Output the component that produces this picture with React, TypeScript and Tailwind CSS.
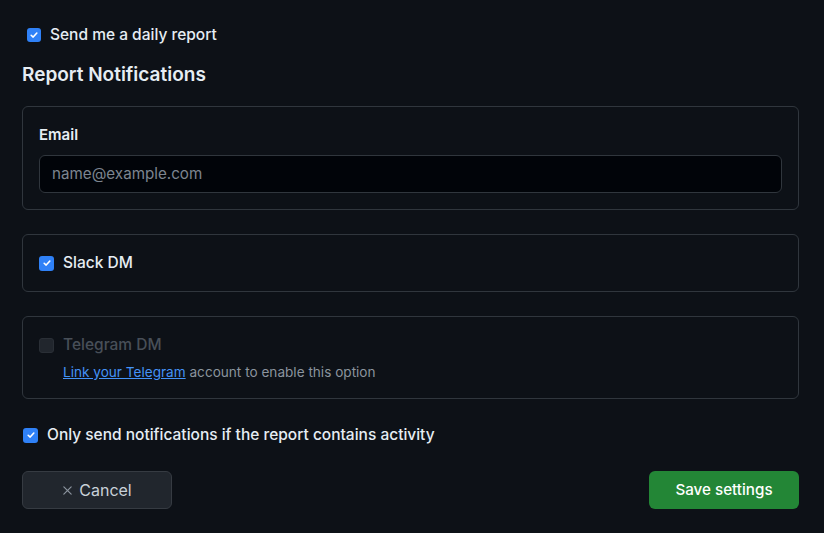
import React from "react";

function Check({ checked = true, disabled = false, size = 15 }: { checked?: boolean; disabled?: boolean; size?: number }) {
  const sz = size === 14 ? "w-[14px] h-[14px]" : "w-[15px] h-[15px]";
  if (disabled) {
    return <span className={`${sz} shrink-0 rounded-[3px] bg-[#21262d] border border-[#2a2f36]`} />;
  }
  return (
    <span className={`${sz} shrink-0 rounded-[3px] bg-[#2f81f7] flex items-center justify-center`}>
      {checked && (
        <svg viewBox="0 0 12 12" className="w-[10px] h-[10px]" fill="none">
          <path d="M2.6 6.3 L5 8.5 L9.4 3.6" stroke="#ffffff" strokeWidth="1.9" strokeLinecap="round" strokeLinejoin="round" />
        </svg>
      )}
    </span>
  );
}

export default function App() {
  return (
    <div
      className="min-h-[533px] w-full bg-[#0d1117] text-[#e6edf3] pl-[22px] pr-[25px] pt-[25px]"
      style={{ fontFamily: "Inter, 'Noto Sans', sans-serif" }}
    >
      <label className="flex items-center h-5 pl-[5px] gap-[9px]">
        <Check size={14} />
        <span className="text-[15.5px] font-medium">Send me a daily report</span>
      </label>

      <h2 className="mt-4 text-[19px] leading-7 font-semibold text-[#e6edf3]">Report Notifications</h2>

      <div className="mt-[17px] border border-[#30363d] rounded-md p-4">
        <div className="text-[15px] leading-6 font-semibold">Email</div>
        <div className="mt-2 h-[38px] rounded-md border border-[#30363d] bg-[#010409] flex items-center px-3">
          <span className="text-[15.2px] text-[#7d8590]">name@example.com</span>
        </div>
      </div>

      <div className="mt-6 border border-[#30363d] rounded-md p-4">
        <label className="flex items-center h-6 gap-[9px]">
          <Check />
          <span className="text-[15.5px] font-medium">Slack DM</span>
        </label>
      </div>

      <div className="mt-6 border border-[#30363d] rounded-md p-4">
        <label className="flex items-center h-6 gap-[9px]">
          <Check disabled />
          <span className="text-[15.5px] font-medium text-[#484f58]">Telegram DM</span>
        </label>
        <div className="mt-[5px] pl-[24px] text-[13.6px] leading-5 text-[#8b949e]">
          <a className="text-[#4493f8] underline">Link your Telegram</a> account to enable this option
        </div>
      </div>

      <label className="mt-6 flex items-center h-6 pl-[1px] gap-[9px]">
        <Check />
        <span className="text-[15.5px] font-medium">Only send notifications if the report contains activity</span>
      </label>

      <div className="mt-6 flex justify-between">
        <button className="w-[150px] h-[38px] rounded-md bg-[#21262d] border border-[#363b42] flex items-center justify-center gap-[6px] text-[16px] text-[#c9d1d9]">
          <svg viewBox="0 0 12 12" className="w-[11px] h-[11px]" fill="none">
            <path d="M2 2 L10 10 M10 2 L2 10" stroke="#8b949e" strokeWidth="1.3" strokeLinecap="round" />
          </svg>
          <span>Cancel</span>
        </button>
        <button className="w-[150px] h-[38px] rounded-md bg-[#238636] flex items-center justify-center text-[15.2px] font-medium text-white">
          Save settings
        </button>
      </div>
    </div>
  );
}
